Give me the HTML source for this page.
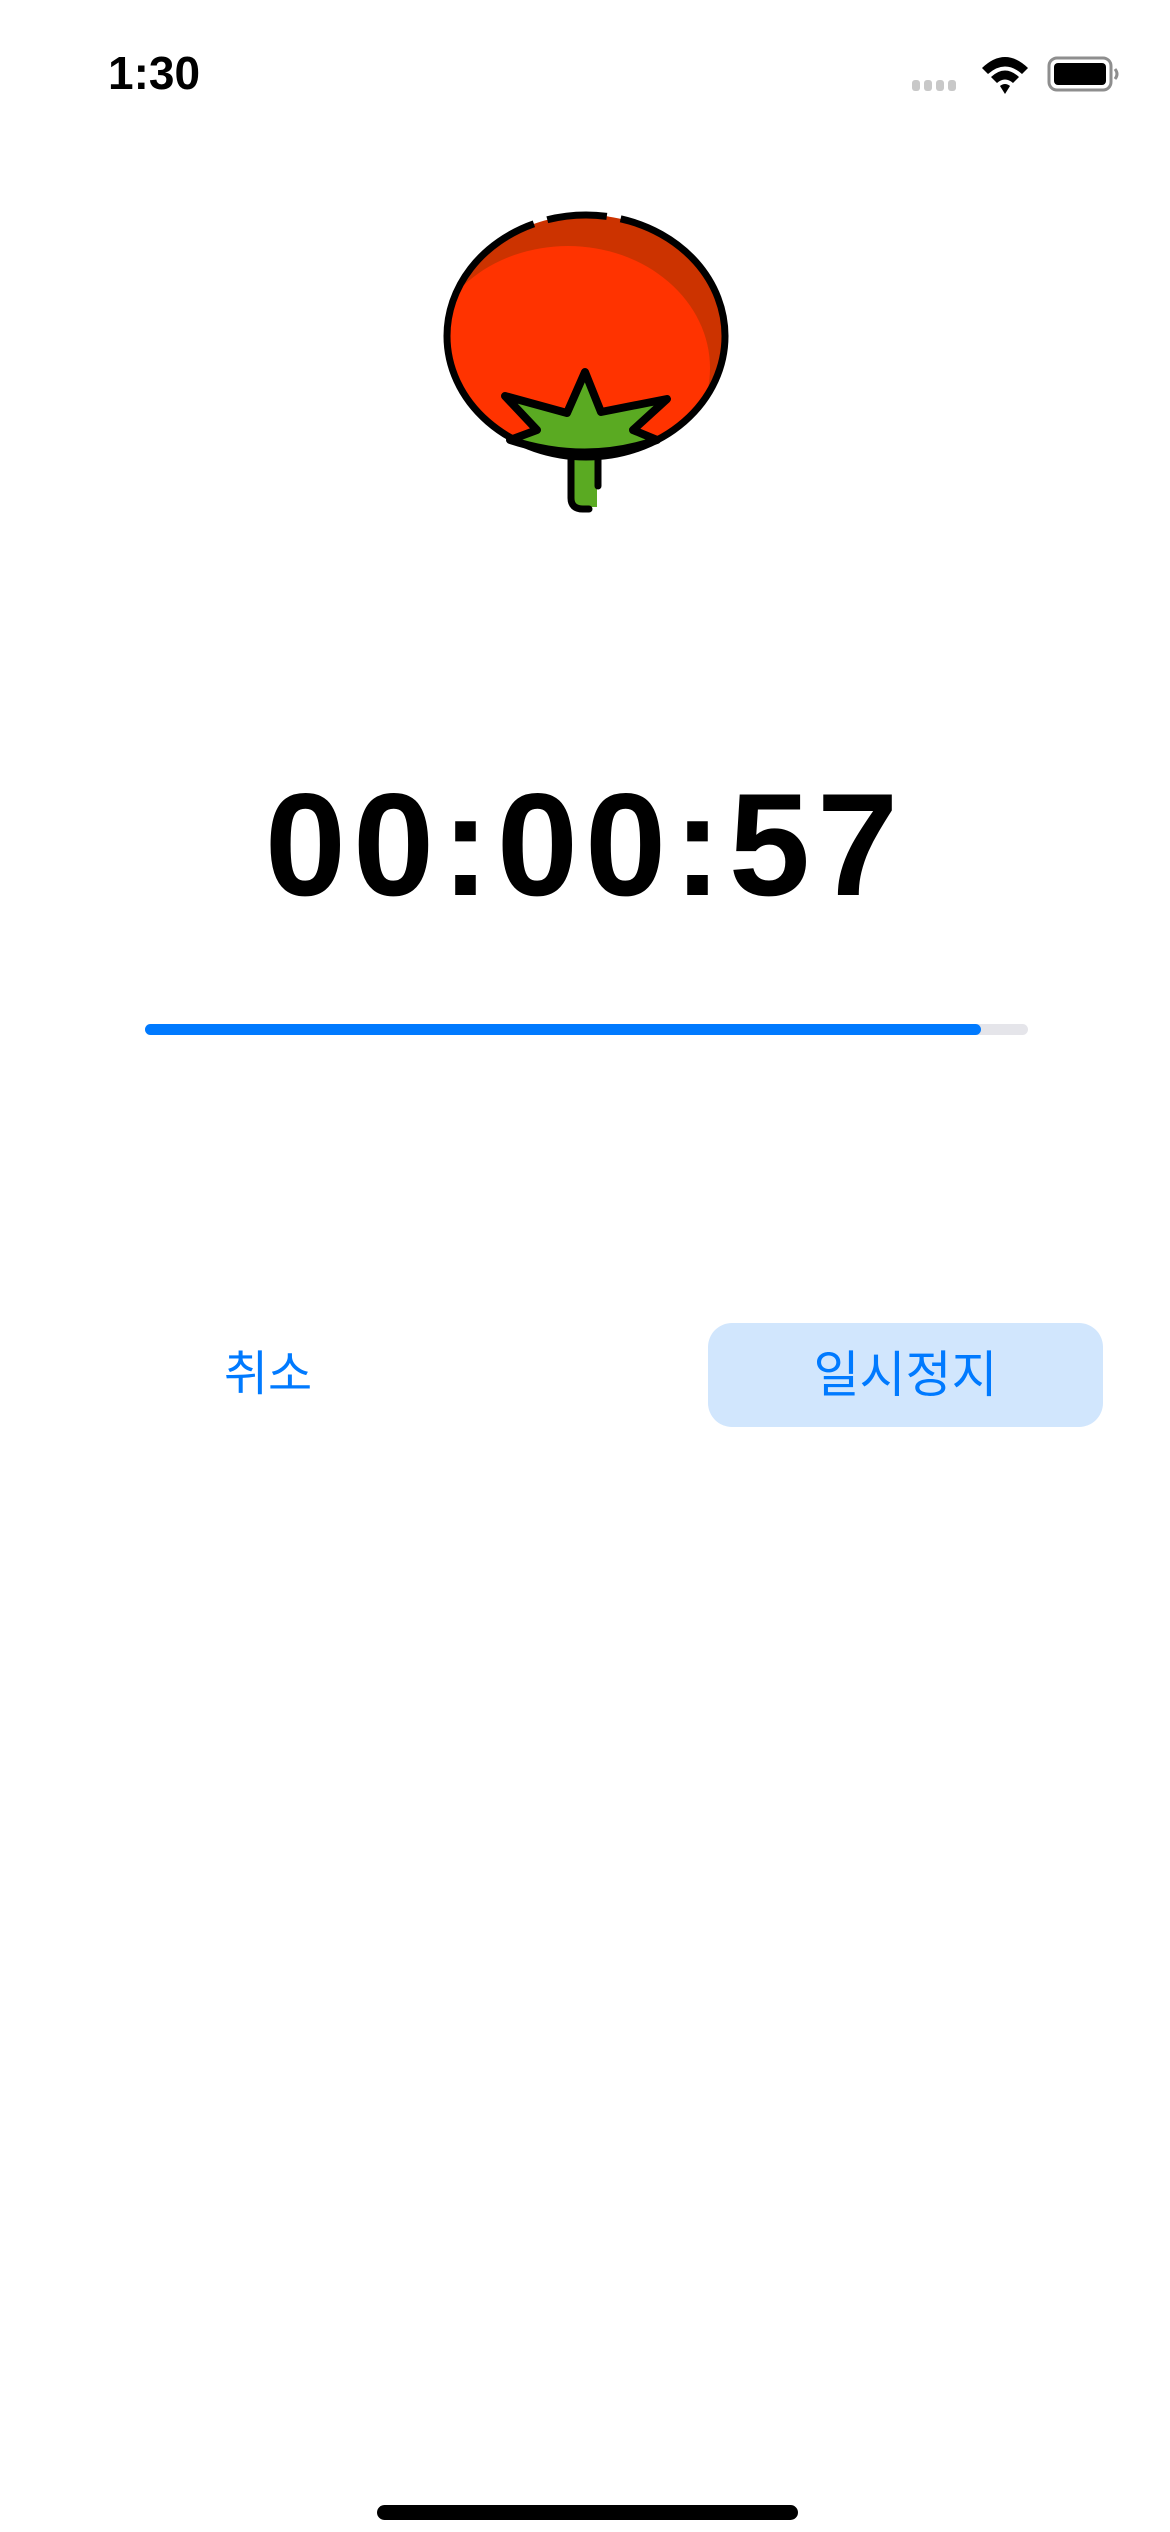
<!DOCTYPE html>
<html><head><meta charset="utf-8"><style>
html,body{margin:0;padding:0;background:#fff;width:1170px;height:2532px;overflow:hidden;position:relative;font-family:"Liberation Sans","Noto Sans CJK KR",sans-serif}
.abs{position:absolute}
</style></head><body>
<div class="abs" style="left:108px;top:46px;font-size:46px;font-weight:600;color:#000;letter-spacing:0">1:30</div>
<svg class="abs" style="left:0;top:0" width="1170" height="2532" viewBox="0 0 1170 2532">
  <g fill="#c8c8c8">
    <rect x="912" y="80" width="8" height="11" rx="3"/><rect x="924" y="80" width="8" height="11" rx="3"/>
    <rect x="936" y="80" width="8" height="11" rx="3"/><rect x="948" y="80" width="8" height="11" rx="3"/>
  </g>
  <g fill="#000">
    <path d="M982 68 Q1005 46 1028 68 L1022 74 Q1005 59 988 74 Z"/>
    <path d="M991 77 Q1005 64 1019 77 L1013 83 Q1005 76 997 83 Z"/>
    <path d="M1000 86 Q1005 82 1010 86 L1005 94 Z"/>
  </g>
  <rect x="1049" y="58" width="62" height="32" rx="8" fill="none" stroke="#8e8e8e" stroke-width="3"/>
  <rect x="1054" y="63" width="52" height="22" rx="4" fill="#000"/>
  <path d="M1115 69 q4 5 0 10" stroke="#8e8e8e" stroke-width="3" fill="none"/>

  <ellipse cx="586" cy="336" rx="139" ry="121" fill="#cc3300"/>
  <clipPath id="c"><ellipse cx="586" cy="336" rx="139" ry="121"/></clipPath>
  <ellipse cx="568" cy="368" rx="142" ry="122" fill="#ff3300" clip-path="url(#c)"/>
  <rect x="571" y="455" width="26" height="52" fill="#5aaa22"/>
  <path d="M571 455 L571 498 Q571 509 583 509 L589 509 M598 460 L598 486" fill="none" stroke="#000" stroke-width="7" stroke-linecap="round"/>
  <ellipse cx="586" cy="336" rx="139" ry="121" fill="none" stroke="#000" stroke-width="7" stroke-dasharray="560 14 60 14 600"/>
  <path d="M537 430 L505 396 L567 413 L585 372 L601 412 L667 399 L633 430 L657 440 Q586 465 510 440 Z" fill="#5aaa22" stroke="#000" stroke-width="8" stroke-linejoin="round"/>

  <rect x="145" y="1024" width="883" height="11" rx="5.5" fill="#e5e5ea"/>
  <rect x="145" y="1024" width="836" height="11" rx="5.5" fill="#007aff"/>

  <rect x="377" y="2505" width="421" height="15" rx="7.5" fill="#000"/>
</svg>
<div class="abs" style="left:0;width:1170px;top:770px;text-align:center;font-size:146px;font-weight:700;color:#000;line-height:150px;letter-spacing:7px">00:00:57</div>
<div class="abs" style="left:188px;width:160px;top:1345px;text-align:center;font-size:48px;color:#007aff;line-height:60px">취소</div>
<div class="abs" style="left:708px;top:1323px;width:395px;height:104px;border-radius:24px;background:#d1e6fd"></div>
<div class="abs" style="left:708px;width:395px;top:1345px;text-align:center;font-size:50px;color:#007aff;line-height:60px">일시정지</div>
</body></html>
